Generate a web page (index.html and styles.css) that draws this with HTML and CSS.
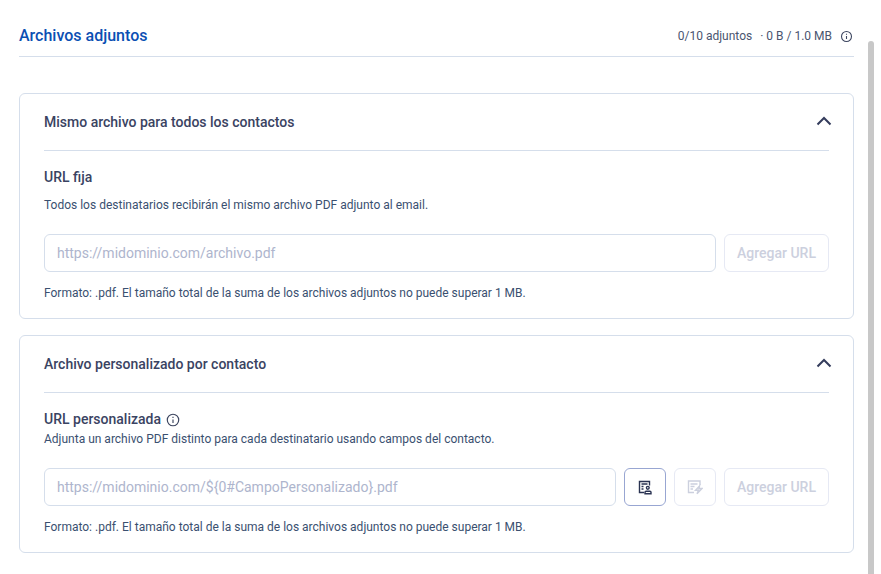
FILE: index.html
```html
<!DOCTYPE html>
<html lang="es">
<head>
<meta charset="utf-8">
<title>Archivos adjuntos</title>
<link rel="stylesheet" href="styles.css">
</head>
<body>
<main class="page">
  <header class="top">
    <h1 class="title">Archivos adjuntos</h1>
    <div class="meta">
      <span>0/10 adjuntos</span>
      <span class="meta-size">· 0 B / 1.0 MB</span>
      <svg class="info meta-info" viewBox="0 0 12 12"><circle cx="6" cy="6" r="4.6"/><path d="M6 5.6v2.8M6 3.4v.9"/></svg>
    </div>
  </header>

  <section class="card first">
    <div class="card-head">
      <h2 class="card-title">Mismo archivo para todos los contactos</h2>
      <svg class="chev" viewBox="0 0 16 10"><path d="M1.5 8.5 8 2l6.5 6.5"/></svg>
    </div>
    <div class="card-body">
      <h3 class="label">URL fija</h3>
      <p class="desc fixed">Todos los destinatarios recibirán el mismo archivo PDF adjunto al email.</p>
      <div class="row">
        <input class="field" type="text" placeholder="https://midominio.com/archivo.pdf">
        <button class="btn" type="button" disabled>Agregar URL</button>
      </div>
      <p class="hint">Formato: .pdf. El tamaño total de la suma de los archivos adjuntos no puede superar 1 MB.</p>
    </div>
  </section>

  <section class="card">
    <div class="card-head">
      <h2 class="card-title">Archivo personalizado por contacto</h2>
      <svg class="chev" viewBox="0 0 16 10"><path d="M1.5 8.5 8 2l6.5 6.5"/></svg>
    </div>
    <div class="card-body">
      <h3 class="label with-icon">URL personalizada
        <svg class="info label-info" viewBox="0 0 12 12"><circle cx="6" cy="6" r="4.9"/><path d="M6 5.5v3M6 3.3v.9"/></svg>
      </h3>
      <p class="desc tight">Adjunta un archivo PDF distinto para cada destinatario usando campos del contacto.</p>
      <div class="row">
        <input class="field" type="text" placeholder="https://midominio.com/${0#CampoPersonalizado}.pdf">
        <button class="icon-btn active" type="button" aria-label="Campos del contacto">
          <svg viewBox="0 0 16 16"><path d="M7 13.5H2.500V2.500h10v4"/><path d="M4.500 5h6M4.500 7.500h2M4.500 10h2"/><circle cx="10.800" cy="8.800" r="1.400"/><path d="M8 14.800v-1.500c0-.6.500-1.100 1.100-1.100h3.800c.6 0 1.100.5 1.100 1.100v1.500z"/></svg>
        </button>
        <button class="icon-btn" type="button" disabled aria-label="Campos dinámicos">
          <svg viewBox="0 0 16 16"><path d="M7 13.500H1.500V2h11.500v4"/><path d="M3.500 5h7M3.500 7.500h4M3.500 10h2.500"/><path d="M12.500 7 8.500 11.300h3l-1.500 3.500 5-5.300h-3z"/></svg>
        </button>
        <button class="btn" type="button" disabled>Agregar URL</button>
      </div>
      <p class="hint">Formato: .pdf. El tamaño total de la suma de los archivos adjuntos no puede superar 1 MB.</p>
    </div>
  </section>
</main>
<div class="scrollbar"></div>
</body>
</html>
```
FILE: styles.css
```css
* { box-sizing: border-box; }
html, body { margin: 0; height: 100%; }
body {
  background: #fff;
  font-family: Roboto, "Liberation Sans", sans-serif;
  color: #344563;
  overflow: hidden;
}
.page {
  width: 854px;
  padding: 0 0 0 19px;
}
.top {
  height: 57px;
  padding-top: 26px;
  display: flex;
  align-items: flex-start;
  justify-content: space-between;
  border-bottom: 1px solid #d5deeb;
}
.title {
  margin: 0;
  font-size: 16px;
  line-height: 20px;
  font-weight: 500;
  color: #0b4fb3;
}
.meta {
  display: flex;
  align-items: center;
  height: 20px;
  padding-right: 1px;
  font-size: 12px;
  color: #4a5570;
}
.meta-size { margin-left: 8px; }
.meta-info { margin-left: 8px; width: 13px; height: 13px; }
.info { fill: none; stroke: #3d4660; stroke-width: 1; }
.card {
  border: 1px solid #d5deeb;
  border-radius: 6px;
  padding: 0 24px;
  height: 218px;
  margin-top: 16px;
}
.card.first { margin-top: 36px; height: 226px; }
.card-head {
  height: 57px;
  display: flex;
  align-items: center;
  justify-content: space-between;
  border-bottom: 1px solid #d5deeb;
}
.card-title {
  margin: 0;
  font-size: 14px;
  font-weight: 500;
  color: #3a4362;
}
.chev {
  width: 16px;
  height: 10px;
  margin-right: -3px;
  margin-top: -2px;
  fill: none;
  stroke: #343c5c;
  stroke-width: 2;
}
.label {
  margin: 0;
  padding-top: 17px;
  font-size: 14px;
  line-height: 18px;
  font-weight: 500;
  color: #3a4362;
}
.with-icon { display: flex; align-items: center; padding-top: 18px; line-height: 17px; }
.label-info { width: 14px; height: 14px; margin-left: 5px; }
.desc {
  margin: 0;
  font-size: 12px;
  line-height: 16px;
  color: #3a5070;
}
.desc.fixed { padding-top: 11px; }
.desc.tight { padding-top: 3px; }
.row {
  display: flex;
  gap: 8px;
  margin-top: 21px;
  height: 38px;
}
.field {
  flex: 1;
  min-width: 0;
  height: 38px;
  border: 1px solid #d5deeb;
  border-radius: 6px;
  padding: 0 12px;
  font: 14px Roboto, sans-serif;
  background: #fff;
  outline: none;
}
.field::placeholder { color: #aeb5cd; opacity: 1; }
.btn {
  width: 105px;
  height: 38px;
  border: 1px solid #e6e9f4;
  border-radius: 6px;
  background: #fff;
  font: 500 14px Roboto, sans-serif;
  color: #ccd0de;
  padding: 0;
}
.icon-btn {
  width: 42px;
  height: 38px;
  border: 1px solid #e6e9f4;
  border-radius: 6px;
  background: #fff;
  padding: 0;
  display: flex;
  align-items: center;
  justify-content: center;
}
.icon-btn svg {
  width: 16px;
  height: 16px;
  fill: none;
  stroke: #ccd0de;
  stroke-width: 1.4;
}
.icon-btn.active { border-color: #98a6d2; }
.icon-btn.active svg { stroke: #2a3352; }
.hint {
  margin: 0;
  padding-top: 13px;
  font-size: 12px;
  line-height: 16px;
  color: #3a5070;
}
.scrollbar {
  position: absolute;
  left: 868px;
  top: 41px;
  width: 6px;
  bottom: 0;
  background: #c8c8c8;
  border-radius: 3px 3px 0 0;
}
```
